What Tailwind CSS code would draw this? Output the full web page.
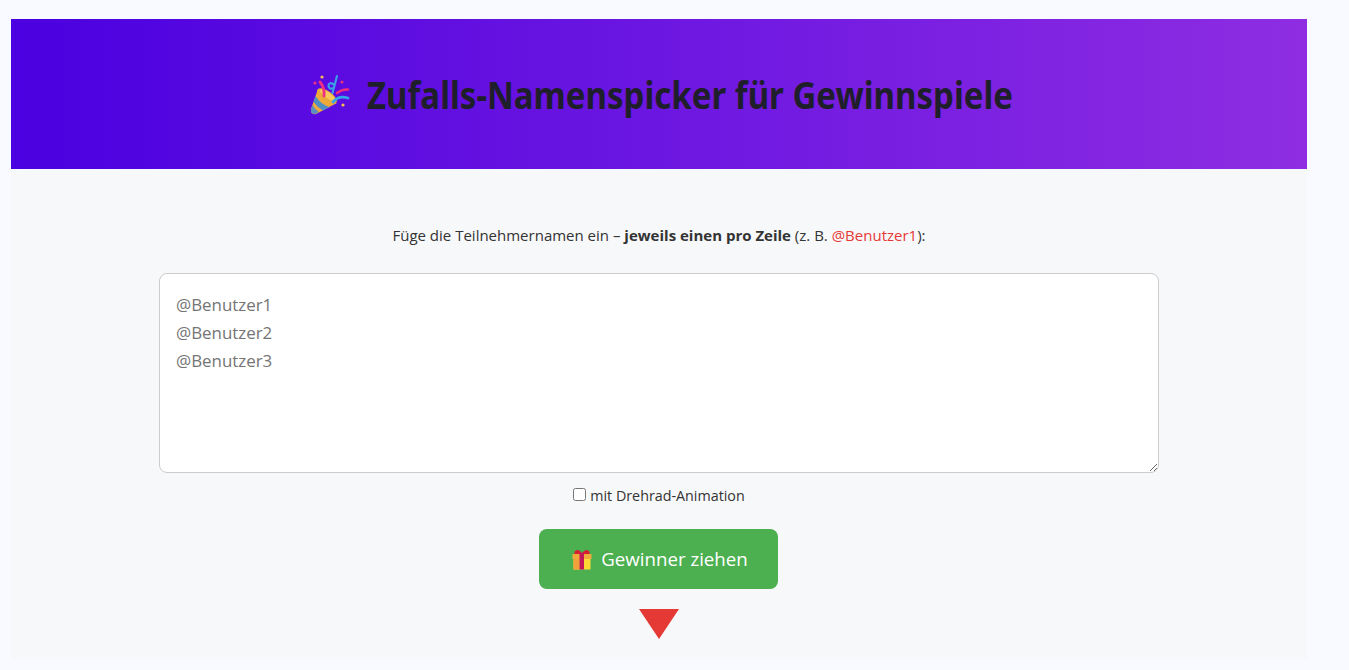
<!DOCTYPE html>
<html lang="de">
<head>
  <meta charset="UTF-8" />
  <title>Zufalls-Namenspicker</title>
  <script src="https://cdn.jsdelivr.net/npm/@tailwindcss/browser@4"></script>
</head>
<body class="bg-[#f9faff] text-[#333] font-['Open_Sans','Noto_Sans',sans-serif] h-[670px] overflow-hidden">

  <div class="ml-[11px] mt-[19px] w-[1296px] h-[640px] bg-[#f7f8fa]">

    <!-- Header -->
    <header class="h-[150px] bg-linear-to-r/srgb from-[#4a00e0] to-[#8e2de2] flex items-center justify-center gap-[17px] pl-[5px]">
      <svg class="w-[40px] h-[41px]" viewBox="0 0 40 41" aria-hidden="true">
        <path d="M8 15 L1 35 Q0 41 6 40 L27 29 Q19 29 14 24 Q9 20 8 15Z" fill="#f2a93b"/>
        <path d="M5.500 22 Q11 31 20 33 L13 36.500 Q7 33 3.500 28Z" fill="#4f8fc4"/>
        <path d="M2.500 31 Q5 35.500 9 38 L5 40 Q0 40 1 35Z" fill="#5d8fc0"/>
        <ellipse cx="17" cy="22" rx="11.500" ry="5" transform="rotate(35 17 22)" fill="#e9a83a"/>
        <ellipse cx="17.500" cy="21" rx="9" ry="3" transform="rotate(35 17.500 21)" fill="#f7c95a"/>
        <path d="M10 8 Q15 14 14 22" fill="none" stroke="#ef2f7f" stroke-width="2.800" stroke-linecap="round"/>
        <path d="M27 2 L22.500 19 M24.500 11 Q19 7 18.500 12 Q19 16 23.500 14" fill="none" stroke="#3a9fe6" stroke-width="2.200" stroke-linecap="round"/>
        <path d="M27 19 Q32 15 38 15.500" fill="none" stroke="#ef2f7f" stroke-width="2.600" stroke-linecap="round"/>
        <path d="M23 28 Q29 21 38 24" fill="none" stroke="#35a6e8" stroke-width="2.800" stroke-linecap="round"/>
        <circle cx="12" cy="3" r="1.600" fill="#f5c04e"/>
        <circle cx="5" cy="9" r="1.600" fill="#ef2f7f"/>
        <circle cx="32" cy="8" r="1.600" fill="#e0337a"/>
        <circle cx="33" cy="31" r="1.600" fill="#f5c04e"/>
      </svg>
      <div class="w-[646px]">
        <h1 class="text-[38px] leading-[60px] font-bold text-[#1f1f2b] whitespace-nowrap origin-left scale-x-[0.869] font-['Noto_Sans',sans-serif]">Zufalls-Namenspicker für Gewinnspiele</h1>
      </div>
    </header>

    <main class="flex flex-col items-center">
      <p class="mt-[56px] text-[15px] leading-[20px] text-center">Füge die Teilnehmernamen ein – <strong>jeweils einen pro Zeile</strong> (z. B. <span class="text-[#e53935]">@Benutzer1</span>):</p>

      <textarea class="mt-[28px] w-[1000px] h-[200px] block bg-white border border-[#ccc] rounded-[8px] px-[16px] pt-[17px] pb-[15px] text-[16.9px] leading-[28px] outline-none placeholder:text-[#757575]" placeholder="@Benutzer1&#10;@Benutzer2&#10;@Benutzer3"></textarea>

      <label class="mt-[12px] flex items-center text-[14.3px] leading-[22px]">
        <input type="checkbox" class="w-[13px] h-[13px] mr-[4px] -mt-[3px] appearance-auto" />
        mit Drehrad-Animation
      </label>

      <button class="mt-[22px] mr-[2px] w-[239px] h-[60px] pl-[4px] pt-[1px] bg-[#4caf50] text-white rounded-[8px] text-[18.7px] flex items-center justify-center gap-[9px]">
        <svg class="w-[20px] h-[21px]" viewBox="0 0 20 21" aria-hidden="true">
          <path d="M3 2 Q6 -1 10 4 Q14 -1 17 2 Q19 6 15 6 L5 6 Q1 6 3 2Z" fill="#d42030"/>
          <rect x="0.500" y="5" width="19" height="5" fill="#f2a93b"/>
          <rect x="1.500" y="10" width="17" height="10.500" fill="#fdd835"/>
          <rect x="1.500" y="10" width="6" height="10.500" fill="#f2a03b"/>
          <rect x="7.500" y="4" width="4.500" height="16.500" fill="#c2185b"/>
        </svg>
        Gewinner ziehen
      </button>

      <div class="mt-[20px] w-0 h-0 border-l-[20px] border-r-[20px] border-t-[30px] border-l-transparent border-r-transparent border-t-[#e53935]"></div>
    </main>
  </div>

</body>
</html>
